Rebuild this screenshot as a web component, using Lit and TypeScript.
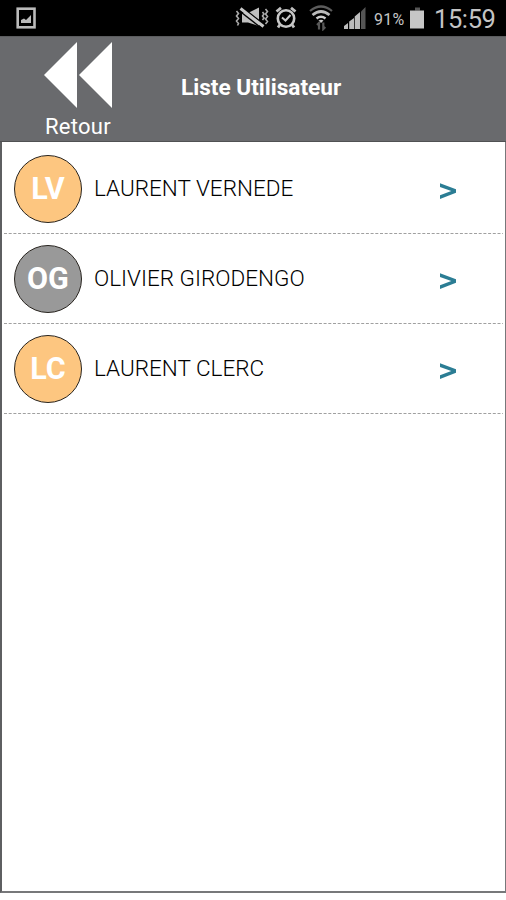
import { LitElement, html, css } from "lit";
import { customElement } from "lit/decorators.js";

interface User {
  initials: string;
  name: string;
  tone: "orange" | "grey";
}

const USERS: User[] = [
  { initials: "LV", name: "LAURENT VERNEDE", tone: "orange" },
  { initials: "OG", name: "OLIVIER GIRODENGO", tone: "grey" },
  { initials: "LC", name: "LAURENT CLERC", tone: "orange" },
];

@customElement("status-bar")
class StatusBar extends LitElement {
  static styles = css`
    :host {
      display: flex;
      align-items: center;
      height: 36px;
      background: #000;
      color: #c4c4c4;
      font-family: Roboto, sans-serif;
      box-sizing: border-box;
    }
    svg { display: block; flex: none; }
    .picture { margin-left: 16px; }
    .vibrate { margin-left: auto; }
    .alarm { margin-left: 6px; }
    .wifi { margin-left: 12px; }
    .signal { margin-left: 11px; }
    .percent {
      width: 32px;
      margin-left: 8px;
      padding-top: 2px;
      font-size: 16px;
      letter-spacing: 0.2px;
      white-space: nowrap;
    }
    .battery { margin-left: 4px; }
    .time {
      width: 61px;
      margin: 2px 11px 0 9px;
      font-size: 25.5px;
      line-height: 30px;
      letter-spacing: -0.4px;
      white-space: nowrap;
    }
  `;

  render() {
    return html`
      <svg class="picture" width="20" height="22" viewBox="0 0 20 22">
        <rect x="1.700" y="1.700" width="16.800" height="18.600" fill="none" stroke="#bbb" stroke-width="2.600" />
        <path d="M5 16V13L8 11.500L10 13L15 8V16Z" fill="#bbb" />
      </svg>
      <svg class="vibrate" width="34" height="24" viewBox="0 0 34 24">
        <path d="M7 7H13L24 1.500V20L13 16.500H7Z" fill="#c0c0c0" />
        <path d="M6.500 1L29 18.500" stroke="#000" stroke-width="1.600" />
        <path d="M5.500 2.500L28.500 20.500" stroke="#c8c8c8" stroke-width="3" />
        <path d="M4.500 5L26.500 22.300" stroke="#000" stroke-width="1.400" />
        <path d="M1.500 5l2 2.500-2 2.500 2 2.500-2 2.500 2 2.500-1 2M30.500 3l2 2.500-2 2.500 2 2.500-2 2.500 2 2.500-2 2.500M27.500 6l1.500 2-1.500 2 1.500 2-1.500 2" fill="none" stroke="#aaa" stroke-width="1.600" />
      </svg>
      <svg class="alarm" width="22" height="24" viewBox="0 0 22 24">
        <circle cx="11" cy="12.500" r="8.200" fill="none" stroke="#c8c8c8" stroke-width="2.600" />
        <path d="M1.500 5.500L6 1.800M16 1.800L20.500 5.500M5 18.500l-2 3M17 18.500l2 3" stroke="#c0c0c0" stroke-width="2.800" />
        <path d="M7 11.500l3.500 3 5-5.500" fill="none" stroke="#c8c8c8" stroke-width="2" />
      </svg>
      <svg class="wifi" width="24" height="26" viewBox="0 0 24 26">
        <path d="M1 6Q12-3 23 6" fill="none" stroke="#5c5c5c" stroke-width="2.200" />
        <path d="M3.500 10Q12 3 20.500 10" fill="none" stroke="#bbb" stroke-width="2.700" />
        <path d="M7.500 13.500Q12 10 16.500 13.500" fill="none" stroke="#ccc" stroke-width="2.500" />
        <path d="M9.500 15.500Q12 14 14.500 15.500L12 18Z" fill="#ccc" />
        <path d="M10 24.500v-6.500l-2 2M14.300 17.500V24l2-2" fill="none" stroke="#585858" stroke-width="2.200" />
      </svg>
      <svg class="signal" width="22" height="24" viewBox="0 0 22 24">
        <path d="M0 23v-3l4-3v6ZM5.200 23v-7.500l4.800-3.500v11ZM10.700 23V10.500L16 6v17Z" fill="#bdbdbd" />
        <path d="M17 23V5.500L21.500 1v22Z" fill="#555" />
      </svg>
      <span class="percent">91%</span>
      <svg class="battery" width="15" height="23" viewBox="0 0 15 23">
        <path d="M5 0.500h5v3H5Z" fill="#555" />
        <rect x="0" y="3.500" width="14" height="18" fill="#c6c6c6" />
      </svg>
      <span class="time">15:59</span>
    `;
  }
}

@customElement("user-row")
class UserRow extends LitElement {
  static properties = { user: { attribute: false } };
  declare user: User;

  static styles = css`
    :host { display: block; font-family: Roboto, sans-serif; }
    .row { display: flex; align-items: center; height: 89px; }
    .avatar {
      display: flex;
      align-items: center;
      justify-content: center;
      flex: none;
      width: 68px;
      height: 68px;
      margin: 0 12px 0 10px;
      box-sizing: border-box;
      border: 1.3px solid #28241f;
      border-radius: 50%;
      color: #fff;
      font-size: 30.5px;
      font-weight: 700;
    }
    .orange { background: #fdc680; }
    .grey { background: #999; }
    .name {
      flex: 1;
      margin-top: -1px;
      color: #000;
      font-size: 22.5px;
      font-weight: 350;
      white-space: nowrap;
    }
    .chevron { flex: none; margin: 4px 46px 0 0; }
    .rule { display: block; width: 100%; height: 1px; }
  `;

  render() {
    return html`
      <div class="row">
        <div class="avatar ${this.user.tone}">${this.user.initials}</div>
        <span class="name">${this.user.name}</span>
        <svg class="chevron" width="18" height="18" viewBox="0 0 18 18">
          <path d="M1 1.200L17 7.200V10.800L1 17V13.300L12.300 9L1 4.900Z" fill="#2b7d94" />
        </svg>
      </div>
      <svg class="rule" height="1">
        <line x1="0" y1="0.500" x2="100%" y2="0.500" stroke="#a0a0a0" stroke-dasharray="3 1.700" />
      </svg>
    `;
  }
}

@customElement("app-root")
class AppRoot extends LitElement {
  static styles = css`
    :host {
      display: flex;
      flex-direction: column;
      height: 900px;
      background: #fff;
      font-family: Roboto, sans-serif;
      overflow: hidden;
    }
    .header {
      display: flex;
      flex: none;
      height: 106px;
      box-sizing: border-box;
      border-top: 1px solid #5b5c5e;
      border-bottom: 1px solid #505153;
      background: #696a6d;
      color: #fff;
    }
    .back {
      display: flex;
      flex-direction: column;
      align-items: center;
      width: 156px;
      padding-top: 5px;
    }
    .back svg { display: block; }
    .label { margin-top: 6px; font-size: 22px; line-height: 26px; letter-spacing: 0.3px; }
    .title {
      margin: 37px 0 0 25px;
      font-size: 22.6px;
      line-height: 28px;
      font-weight: 700;
      white-space: nowrap;
    }
    .panel {
      flex: none;
      height: 751px;
      box-sizing: border-box;
      border: solid #77787a;
      border-width: 0 1px 2px 2px;
      border-left-color: #5e5f61;
      padding: 2px 2px 0;
    }
  `;

  render() {
    return html`
      <status-bar></status-bar>
      <div class="header">
        <div class="back">
          <svg width="68" height="66" viewBox="0 0 68 66">
            <path d="M0 33L33 0V66ZM35 33L68 0V66Z" fill="#fff" />
          </svg>
          <span class="label">Retour</span>
        </div>
        <div class="title">Liste Utilisateur</div>
      </div>
      <div class="panel">
        ${USERS.map((user) => html`<user-row .user=${user}></user-row>`)}
      </div>
    `;
  }
}
